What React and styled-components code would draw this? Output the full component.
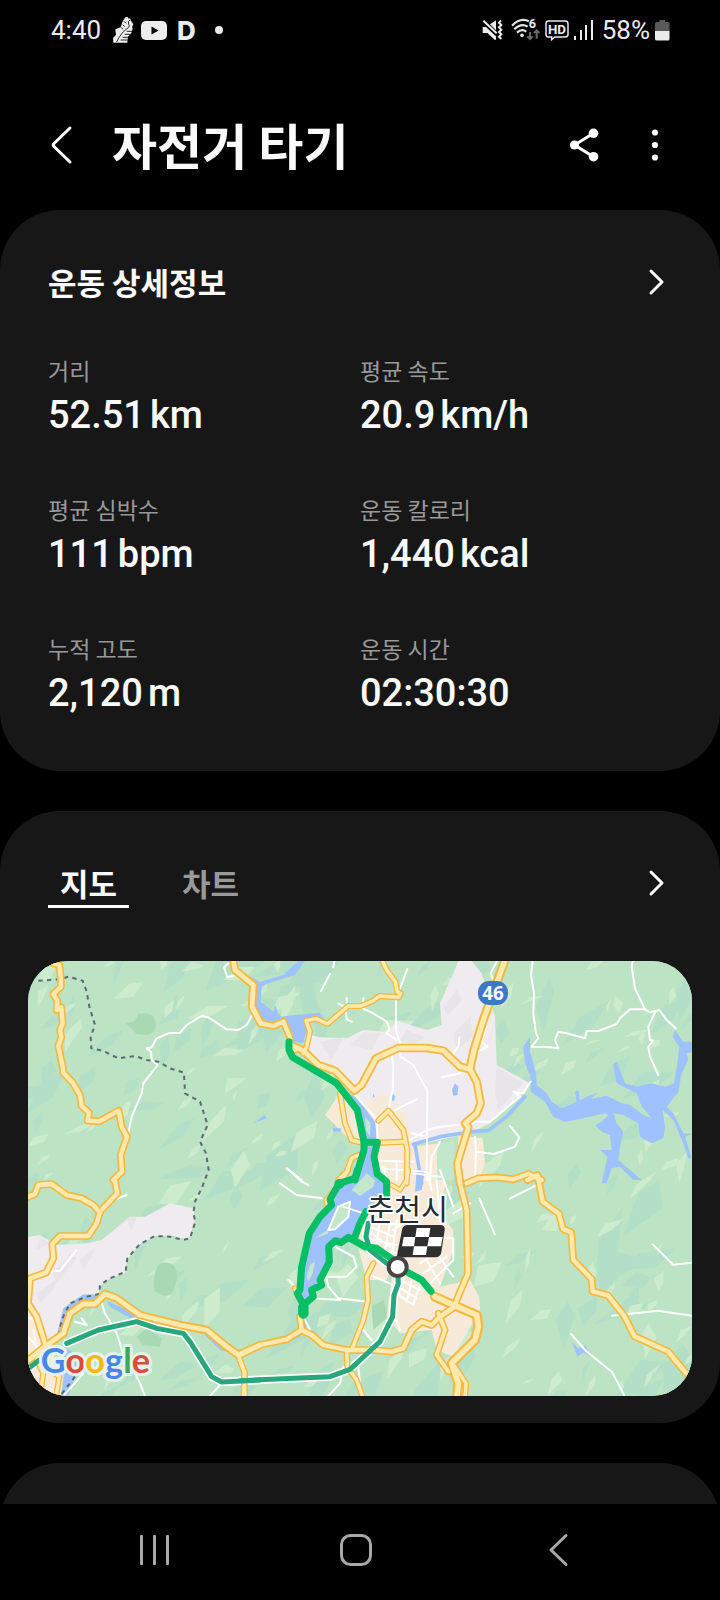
import React from 'react';
import styled, { createGlobalStyle } from 'styled-components';

const Global = createGlobalStyle`
  *, *::before, *::after { box-sizing: border-box; }
  html { background: #000; }
  body {
    margin: 0;
    background: #000;
    color: #fafafa;
    font-family: Roboto, 'Noto Sans CJK KR', sans-serif;
  }
`;

const Page = styled.div`
  display: flex;
  flex-direction: column;
  min-height: 100vh;
`;

const StatusBar = styled.div`
  display: flex;
  align-items: center;
  justify-content: space-between;
  height: 60px;
  padding: 0 50px 0 51px;
  color: #ececec;
  font-size: 26px;
  line-height: 32px;
`;

const StatusGroup = styled.div`
  display: flex;
  align-items: center;
  gap: ${(p) => p.$gap}px;
`;

const Glyph = styled.svg`
  display: block;
  flex: none;
`;

const IconButton = styled.button`
  display: flex;
  align-items: center;
  justify-content: center;
  flex: none;
  padding: 0;
  border: 0;
  background: none;
  color: ${(p) => p.$tone || '#fff'};
  cursor: pointer;
`;

const Header = styled.header`
  display: flex;
  align-items: center;
  gap: 39px;
  padding: 49px 53px 29px 49px;
`;

const Title = styled.h1`
  flex: 1;
  margin: 0;
  padding-bottom: 2px;
  font-family: 'Noto Sans CJK KR', sans-serif;
  font-size: 49px;
  font-weight: 700;
  line-height: 70px;
`;

const Actions = styled.div`
  display: flex;
  align-items: center;
  gap: 43px;
`;

const Cards = styled.main`
  display: flex;
  flex: 1;
  flex-direction: column;
  gap: 40px;
`;

const Card = styled.section`
  padding: 47px 0 ${(p) => p.$bottom}px;
  border-radius: 60px;
  background: #171717;
`;

const CardHead = styled.div`
  display: flex;
  align-items: center;
  justify-content: space-between;
  height: 50px;
  padding: 0 48px;
`;

const CardTitle = styled.h2`
  margin: 0;
  font-family: 'Noto Sans CJK KR', sans-serif;
  font-size: 31px;
  font-weight: 700;
  line-height: 44px;
`;

const Stats = styled.dl`
  display: grid;
  grid-template-columns: 1fr 1fr;
  row-gap: 55px;
  margin: 0;
  padding: 47px 48px 0;
`;

const Stat = styled.div`
  display: flex;
  flex-direction: column;
  gap: 6px;
`;

const StatLabel = styled.dt`
  color: #999;
  font-family: 'Noto Sans CJK KR', sans-serif;
  font-size: 23px;
  line-height: 32px;
`;

const StatValue = styled.dd`
  display: flex;
  gap: 5px;
  margin: 0;
  font-size: 38px;
  font-weight: 500;
  line-height: 46px;
`;

const Tabs = styled.div`
  display: flex;
  gap: 41px;
`;

const Tab = styled.button`
  padding: 3px 12px 0;
  border: 0;
  border-bottom: 3px solid ${(p) => (p.$active ? '#fff' : 'transparent')};
  background: none;
  color: ${(p) => (p.$active ? '#fafafa' : '#999')};
  font-family: 'Noto Sans CJK KR', sans-serif;
  font-size: 31px;
  font-weight: 700;
  line-height: 44px;
  cursor: pointer;
`;

const MapFrame = styled.div`
  margin: 53px 28px 0;
  overflow: hidden;
  border-radius: 40px;
  background: #bbe3c4;
`;

const MapSvg = styled.svg`
  display: block;
  width: 100%;
  height: auto;
`;

const Peek = styled.div`
  flex: 1 0 0;
  min-height: 41px;
  overflow: hidden;
`;

const PeekCard = styled.div`
  height: 100%;
  min-height: 120px;
  border-radius: 60px 60px 0 0;
  background: #171717;
`;

const NavBar = styled.nav`
  display: grid;
  grid-template-columns: repeat(3, 1fr);
  justify-items: center;
  align-items: center;
  height: 96px;
  padding: 0 61px 4px 54px;
`;

/* ---- icons ---- */

const Chevron = ({ label }) => (
  <IconButton aria-label={label}>
    <Glyph width="24" height="32" viewBox="0 0 24 32" fill="none" stroke="currentColor" strokeWidth="3" strokeLinecap="round" strokeLinejoin="round">
      <path d="M3 5L14 16L3 27" />
    </Glyph>
  </IconButton>
);

const Shoe = () => (
  <Glyph width="22" height="28" viewBox="0 0 66 84" fill="#ececec">
    <path d="M40 4L46 2L50 8L54 7L57 14L64 25L60 34L62 38L58 52L48 62L46 80H4L3 66L12 56L10 40L26 34L32 16Z" />
    <path d="M54 12Q46 16 50 24Q54 28 50 34Q40 40 30 52T14 78M36 16L42 22M32 26L38 32M28 34L33 40M44 46L62 46M38 55L60 55M32 64L50 64M26 72L48 72" fill="none" stroke="#000" strokeWidth="2.500" />
  </Glyph>
);

const Play = () => (
  <Glyph width="26" height="20" viewBox="0 0 26 20">
    <rect width="26" height="19" y="1" rx="5" fill="#ececec" />
    <path d="M10.500 6.500L17.500 10.500L10.500 14.500Z" fill="#000" />
  </Glyph>
);

const DLogo = () => (
  <Glyph width="20" height="36" viewBox="0 0 20 36">
    <text x="0" y="28" fill="#ececec" fontFamily="Inter, sans-serif" fontSize="26" fontWeight="800">D</text>
  </Glyph>
);

const Mute = () => (
  <Glyph width="21" height="22" viewBox="0 0 63 66" fill="#ececec">
    <path d="M2 24H12L42 52V62H38L16 42H2ZM24 16L42 4V34Z" />
    <path d="M4 5L44 43" stroke="#ececec" strokeWidth="6" />
    <path d="M57 4L51 11L58 18L51 25L58 32L51 39L58 46L51 53L58 60" fill="none" stroke="#ececec" strokeWidth="6" />
  </Glyph>
);

const Wifi = () => (
  <Glyph width="29" height="30" viewBox="0 -9 87 90">
    <g fill="none" stroke="#e4e4e4" strokeWidth="6.500">
      <path d="M3 23Q28 -3 54 10" />
      <path d="M10 34Q30 14 50 26" />
      <path d="M18 44Q32 31 46 41" />
    </g>
    <circle cx="33" cy="52" r="5.500" fill="#e4e4e4" />
    <text x="53" y="31" fill="#ececec" fontFamily="Roboto, sans-serif" fontSize="38" fontWeight="700">6</text>
    <path d="M57 42V62M49 55L57 63L65 55M77 62V38M69 45L77 37L85 45" fill="none" stroke="#686868" strokeWidth="6" />
  </Glyph>
);

const Hd = () => (
  <Glyph width="24" height="22" viewBox="0 0 72 66">
    <path d="M10 6H60Q69 6 69 14V46Q69 54 60 54H30L20 62V54H10Q3 54 3 46V14Q3 6 10 6Z" fill="none" stroke="#ececec" strokeWidth="4.500" />
    <text x="36" y="44" textAnchor="middle" fill="#ececec" fontFamily="Roboto, sans-serif" fontSize="40" fontWeight="700">HD</text>
  </Glyph>
);

const Signal = () => (
  <Glyph width="20" height="20" viewBox="0 0 20 20" fill="#ececec">
    <rect x="0" y="16" width="2" height="4" />
    <rect x="6" y="10" width="2" height="10" />
    <rect x="11" y="5" width="2" height="15" />
    <rect x="17" y="0" width="2" height="20" />
  </Glyph>
);

const Battery = () => (
  <Glyph width="15" height="22" viewBox="0 0 15 22">
    <path d="M4.500 1H10V3H13Q14.500 3 14.500 4.500V12H0V4.500Q0 3 2 3H4.500Z" fill="#5a5a5a" />
    <path d="M0 12H14.500V20Q14.500 21.500 13 21.500H2Q0 21.500 0 20Z" fill="#ececec" />
  </Glyph>
);

/* ---- map ---- */

/* The map is charted in sheets; each sheet has its own origin and scale. */
const SHEETS = {
  nw: [-24, -33, 1],
  n: [636, -33, 1],
  ne: [1326, -33, 1],
  sw: [-24, 627, 1],
  s: [636, 627, 1],
  se: [-84, -2883, 3.06],
};

const Lines = ({ data, color, width, dash }) =>
  data.map(([sheet, d, w = 1], i) => {
    const [x, y, s] = SHEETS[sheet];
    return (
      <path
        key={i}
        d={d}
        transform={`translate(${x} ${y}) scale(${s})`}
        fill="none"
        stroke={color}
        strokeWidth={(width * w) / s}
        strokeDasharray={dash}
        strokeLinecap={dash ? 'butt' : 'round'}
        strokeLinejoin="round"
      />
    );
  });

const Areas = ({ data, color }) =>
  data.map(([sheet, d], i) => {
    const [x, y, s] = SHEETS[sheet];
    return <path key={i} d={d} fill={color} transform={`translate(${x} ${y}) scale(${s})`} />;
  });

/* Scattered facets for the hill shading, from a fixed seed. */
const facets = (() => {
  let seed = 977;
  const rnd = () => {
    seed = (seed * 16807) % 2147483647;
    return seed / 2147483647;
  };
  return Array.from({ length: 320 }, (_, i) => {
    const light = i >= 160;
    const x = rnd() * 1992;
    const y = rnd() * 1305;
    const r = (light ? 20 : 32) + rnd() * rnd() * (light ? 66 : 100);
    const a = -1.4 + rnd() * 1.3;
    const c = Math.cos(a);
    const s = Math.sin(a);
    const pt = (u, v) => `${Math.round(x + (u * c - v * s) * r)} ${Math.round(y + (u * s + v * c) * r)}`;
    const w = 0.25 + rnd() * 0.45;
    return {
      d: `M${pt(-1, rnd() * 0.3)}L${pt(rnd() * 0.6 - 0.3, -w)}L${pt(1, -w * rnd())}L${pt(rnd() * 0.8 - 0.2, w * rnd())}Z`,
      light,
    };
  });
})();

const urban = [
  ['n', 'M215 255L240 262L320 265L370 240L440 245L470 212L560 240L605 225L600 160L640 70L655 33L695 33L725 70L765 200L770 345L870 400L840 440L750 520L690 550L530 585L420 560L405 515L350 440L343 425L285 362L235 345L190 305Z'],
  ['sw', 'M24 200L60 195L110 225L200 220L245 210L330 140L375 140L450 100L520 115L525 150L505 210L460 198L405 198L360 222L320 270L315 310L270 325L240 350L235 370L190 378L140 410L115 480L100 520L24 600Z'],
  ['sw', 'M24 590L130 600L125 680L24 680Z'],
];

const urbanShade = [
  ['n', 'M240 275L310 262L275 330ZM330 285L375 245L420 250L395 300ZM500 240L555 262L520 285L480 270ZM610 170L650 120L665 150L625 195ZM640 250L690 200L700 260L650 300ZM770 350L850 400L775 480L765 430Z'],
  ['sw', 'M100 310L150 250L170 265L110 340ZM180 270L225 232L215 260L190 300ZM50 370L110 330L100 360L60 400ZM320 145L350 140L335 185ZM60 205L90 220L50 240Z'],
];

const town = [
  ['n', 'M300 430L255 495L335 575L370 575L352 480Z'],
  ['n', 'M375 455L430 430L490 480L520 590L600 580L595 690L420 690L405 640L412 570L405 520Z'],
  ['n', 'M655 555L728 565L735 640L715 700L650 700Z'],
  ['s', 'M440 0L600 0L615 50L600 130L640 180L640 240L600 350L500 370L455 300L375 215L350 200L380 120L440 80Z'],
  ['s', 'M460 290L600 350L690 330L718 380L720 420L640 560L590 540L575 480L480 490L440 440Z'],
  ['s', 'M355 235L455 290L440 330L380 330Z'],
  ['sw', 'M24 440L60 480L100 530L110 678H60L24 620Z'],
];

const water = [
  ['ne', 'M180 260L160 290L165 340L180 375L182 425L225 455L250 500L285 516L340 505L405 490L415 495L395 515L375 525L395 545L420 555L425 600L390 600L412 620L405 655L395 700L410 700L425 655L450 650L490 690L515 690L445 630L450 590L460 545L440 520L430 490L460 495L505 520L510 560L545 580L580 565L585 530L578 480L610 510L640 580L655 625L665 625L645 560L665 552L640 550L610 490L590 470L625 425L635 370L655 330L650 310L666 305L666 275L640 275L615 240L608 260L628 290L622 340L612 400L585 410L545 400L500 410L465 400L440 335L430 345L440 400L500 430L515 470L545 505L520 495L480 465L455 460L410 437L360 447L385 428L350 440L330 452L325 420L315 425L320 455L275 475L245 455L230 430L200 405L198 370L180 305Z'],
  ['n', 'M20 75L60 95L130 75L175 33L195 33L165 75L85 100L65 110L62 155L100 185L105 165L120 200L165 195L240 188L250 205L215 205L195 215L200 240L190 280L160 275L150 240L135 220L105 230L60 215L38 170L45 105Z'],
  ['n', 'M310 425L350 445L405 515L410 570L400 640L410 695L340 695L380 590L375 560L350 480Z'],
  ['s', 'M355 0L410 0L420 25L440 45L440 80L400 90L380 120L350 190L300 210L262 225L262 280L235 330L240 345L195 405L175 360L185 290L210 200L275 105L300 50L345 30Z'],
  ['sw', 'M112 490L130 415L190 373L240 375L235 392L190 395L150 420L128 490Z'],
  ['sw', 'M130 530L165 550L170 600L145 678H122L135 600Z'],
  ['sw', 'M260 392L360 438L330 444L270 410Z'],
  ['sw', 'M545 485L645 550L600 540Z'],
  ['n', 'M645 400L655 410L652 435L640 437L636 420ZM458 430L466 440L460 455L450 445ZM400 430L405 440L398 445ZM40 520L75 495L80 505ZM278 535L305 535L300 545L280 545Z'],
  ['s', 'M530 0H555L545 60L525 65ZM190 440L200 470L140 520L180 500Z'],
  ['se', 'M561 1316L567 1322L574 1319L579 1330L572 1326L566 1330Z'],
];

const islands = [
  ['s', 'M335 60L380 10L405 30L400 50L360 78ZM225 205L270 175L262 192ZM200 320L210 285L225 275L218 310L205 335ZM265 180L295 110L330 95L325 140L285 178Z'],
  ['n', 'M375 500L392 520L390 560L378 540Z'],
  ['n', 'M590 580L640 572L650 640L640 690H592Z'],
];

const parks = [
  ['nw', 'M318 220L345 212L355 192Q375 185 400 198L408 222Q405 252 380 254L350 252Z'],
  ['sw', 'M405 310Q410 278 435 277Q465 280 470 305Q472 345 455 372Q432 384 405 362Q398 335 405 310ZM350 500L380 475L425 505L420 530L370 525Z'],
  ['s', 'M395 410L430 390L445 440L400 480Z'],
];

const streams = [
  ['n', 'M520 583L600 560L690 546'],
  ['ne', 'M0 545L55 542L110 500L165 440'],
  ['n', 'M525 585L545 700'],
];

const minor = [
  ['nw', 'M326 545L335 500L365 430L370 400L413 345L395 330L393 305L380 295L395 292L410 265L445 250L480 248L500 225L545 198L565 202L620 238L655 240L680 225L697 195M625 40L612 52L622 82L640 78'],
  ['n', 'M283 33L280 52M270 72L243 123M502 57L482 110L468 150L468 240L480 280L482 320L520 345L555 410L562 420L560 690M455 310L460 350L458 420L445 480M295 160L320 175L320 145M318 185L320 208L335 215M370 145L368 175L400 190L440 215L448 235L440 250L470 270M658 262L655 290L640 310L645 345M605 382L660 370M465 480L530 448M345 435L412 510L412 580M412 632L520 635M412 655L560 665M470 632V690M430 650L440 690M510 570L560 540L600 530L700 520M515 550L560 560M570 690L575 620L600 575M140 655L185 690'],
  ['ne', 'M188 33L183 75L192 130L190 190L198 250L205 265L185 290L240 292L265 295L255 270L265 245L290 250L345 265L350 243L385 243L440 222L450 205L480 178L525 178L495 115L485 50L488 33M525 178L540 187L568 180L590 210L617 235M555 187L535 230L540 270L550 272L535 290L540 320L565 375M80 35L62 70L68 85M50 230L35 275L52 290L25 305M0 515L60 515L150 440L130 425L160 430L182 395M120 528L148 562L135 590L72 612L18 605L15 560M18 605L15 690'],
  ['s', 'M140 -5L185 35L205 45M120 40L170 75L245 85M255 310L265 350L295 385L380 395M240 345L215 385L300 390M145 330L180 365M275 225L340 260L350 290L320 320L260 320M265 180L295 110L330 95L325 140L285 178ZM310 110L370 130M460 430L480 480M370 480L395 510M265 678L300 640L310 590M355 590L360 640M190 440L215 490M640 130L690 100'],
  ['s', 'M390 170L460 200M395 190L450 230M420 150L410 220M450 160L435 240M540 280L600 240M550 310L620 260M570 340L640 270M560 270L600 340M590 250L640 320M480 330L540 360M475 350L530 385M470 370L520 405M490 320L475 375M515 335L500 395M540 345L520 400M380 310L470 350M460 180L490 160M600 200L640 205L640 270M600 0L640 110M520 10L600 20M560 0L575 60M590 30L600 150M385 155L480 165M380 205L470 225M470 150L455 260M400 240L470 250'],
  ['sw', 'M245 400L255 430L290 490L300 520L310 560L345 610L360 640L375 678M170 240L120 302L80 305M165 455L200 465L185 445M24 440L60 460L70 520M280 90L320 75M570 678L600 645M24 500L60 540M40 480L50 540M130 678L190 610'],
  ['se', 'M470 1175L485 1210M560 1308L575 1325L600 1345L612 1368M640 1220L660 1240L678 1238M500 1175L530 1160M600 1290L645 1285L678 1290'],
];

const roads = [
  ['nw', 'M95 38L118 45L122 80L123 110L100 132L112 152L110 180L124 172L128 220L120 240L124 262L115 288L128 350L130 368L158 398L180 435L185 468L207 488L203 512L238 514L296 482L305 530L321 560L302 615L306 665L280 690'],
  ['sw', 'M284 30L292 70L240 125L230 160L205 198L120 198L97 222L100 265L78 308L30 325L24 400L50 440L75 520'],
  ['sw', 'M20 82L45 72L55 45L95 42L140 75L185 85L220 105L240 128'],
  ['nw', 'M640 30L645 60L700 105L696 170L722 220', 1.1],
  ['n', 'M38 175L62 220L100 228L130 215L150 262L152 290L165 300'],
  ['n', 'M428 33L440 60L466 95L472 125L482 130L476 142L418 138L400 152L362 168L325 168L262 222L228 206L198 212L210 245L200 290L190 310', 0.8],
  ['n', 'M152 285L190 302L235 345L285 362L343 422L365 405L408 325L475 294L560 294L610 302L660 350L690 358L710 395L722 460L710 490L675 520L685 532L652 640L660 700', 1.1],
  ['ne', 'M104 33L40 210L12 300L0 355', 1.2],
  ['s', 'M655 0L660 40L680 120L684 310L650 390L645 410L600 440', 1],
  ['s', 'M680 40L715 25L770 22L820 28L865 12L905 30'],
  ['se', 'M517 1157L527 1152L532 1178L548 1190L552 1205L560 1208L562 1235L580 1254L581 1266L596 1270L612 1290L622 1310L655 1325L680 1355'],
  ['n', 'M300 430L315 520L335 570L370 580L495 575', 0.8],
  ['n', 'M415 512L445 482L490 540L502 600L500 700', 0.8],
  ['n', 'M355 615L335 625L320 665L295 690', 0.8],
  ['s', 'M325 0L300 40L258 90L262 108', 0.7],
  ['s', 'M505 0L500 30L480 60L455 45', 0.7],
  ['s', 'M180 440L185 480L140 508L60 525L0 555'],
  ['s', 'M185 480L215 495L250 525L320 540L400 540L455 545L490 535L515 480L545 455L575 465L600 440L645 410'],
  ['s', 'M400 280L380 320L384 390L370 450L335 540', 0.8],
  ['s', 'M320 540L322 590L350 630L368 680', 0.8],
  ['s', 'M0 570L15 610L10 680', 0.8],
  ['s', 'M165 355L172 375', 0.8],
  ['s', 'M585 380L640 405L710 435L715 470L705 510L635 580L655 640L650 690', 1.3],
  ['s', 'M595 430L615 480L590 555L625 605', 0.9],
  ['s', 'M645 590L678 640L675 690', 0.8],
  ['sw', 'M24 572L75 530L130 490L150 430L190 402L225 402L255 372L290 385L360 435L480 465L560 480L620 530L655 555L720 525', 1.1],
  ['sw', 'M655 555L672 605L675 680', 0.8],
  ['sw', 'M75 530L50 570L70 610L65 645M90 600L118 620L110 670', 0.8],
];

const rail = [
  ['sw', 'M20 600L55 572M140 520L235 480L350 455L410 475L490 490L510 515L575 620L605 636L720 630'],
  ['s', 'M0 632L180 624L270 620L330 598L420 515L458 440L462 375L475 340L472 290L440 280L390 240L378 200L385 160'],
];

const border = [
  ['nw', 'M55 92L120 88L145 80L188 92L200 125L208 170L225 225L212 260L214 295L250 303L295 325L345 318L380 330L415 335L450 355L492 368L495 430L540 455L563 525L540 575L558 610L566 660L545 715L525 755L520 790L526 815L510 865L490 870L450 860L405 858L360 882L322 925L317 965L270 985L240 1005L238 1032L200 1040L150 1060L125 1110L115 1160'],
  ['sw', 'M165 620L120 678'],
];

const route = [
  ['n', 'M147 275L147 300L158 322L290 400L352 480L372 575L372 600L345 690'],
  ['n', 'M372 577L412 577L402 620L412 672L440 695L440 735'],
  ['s', 'M352 0L345 25L298 40L270 88L275 105L240 140L208 190L185 290L180 360L172 370L190 405L190 435L190 405L220 380L215 360L245 345L240 330L268 275L266 230L285 212L303 218L325 202L375 230L410 235L475 280L490 300L545 330L573 364'],
  ['s', 'M345 200L360 160L378 125'],
  ['s', 'M190 412V430', 1.5],
];

const RideMap = () => (
  <MapSvg viewBox="0 0 1992 1305" role="img" aria-label="춘천시 주행 경로 지도">
    <rect width="1992" height="1305" fill="#bbe3c4" />
    {facets.map((f, i) => (
      <path key={i} d={f.d} fill={f.light ? '#cdebcd' : '#b2dfc6'} />
    ))}
    <Areas data={parks} color="#a9d9b3" />
    <Areas data={urban} color="#efebef" />
    <Areas data={urbanShade} color="#e7e5e8" />
    <Areas data={town} color="#f8ead9" />
    <Areas data={water} color="#9dc2ff" />
    <Areas data={islands} color="#c3e7cc" />
    <Lines data={streams} color="#9dc2ff" width={11} />
    <Lines data={minor} color="#fff" width={6} />
    <Lines data={rail} color="#fff" width={25} />
    <Lines data={border} color="#5b6b75" width={6} dash="13 13" />
    <Lines data={roads} color="#f5b942" width={23} />
    <Lines data={roads} color="#ffe9ac" width={13} />
    <Lines data={rail} color="#27a77b" width={15} />
    <Lines data={route} color="#05bf66" width={21} />
    <g transform="translate(1326 -33)">
      <rect x="24" y="93" width="90" height="72" rx="34" fill="#3d78c6" />
      <text x="69" y="149" textAnchor="middle" fill="#fff" fontFamily="'Noto Sans', sans-serif" fontSize="56" fontWeight="700">46</text>
    </g>
    <g transform="translate(636 627)">
      <circle cx="298" cy="42" r="15" fill="#05bf66" />
      <path d="M504 165H600Q616 165 614 180L604 246Q602 262 586 262H470L486 180Q488 165 504 165Z" fill="#2f2f2f" />
      <path d="M530 174H571L567 201H608L603 229H562L558 255H518L522 229H486L491 201H526ZM526 201L522 229H562L567 201Z" fill="#fff" fillRule="evenodd" />
      <circle cx="473" cy="291" r="27" fill="#fff" stroke="#464646" strokeWidth="12" />
      <text x="381" y="150" fill="#242a30" stroke="#fff" strokeWidth="10" strokeLinejoin="round" paintOrder="stroke" fontFamily="'Noto Sans CJK KR', sans-serif" fontSize="88">춘천시</text>
    </g>
    <text x="38" y="1236" fontFamily="Lato, sans-serif" fontSize="103" fontWeight="700" stroke="#e3f3ea" strokeWidth="18" strokeLinejoin="round" paintOrder="stroke">
      <tspan fill="#4886ef">G</tspan>
      <tspan fill="#dc4a3d">o</tspan>
      <tspan fill="#f3b912">o</tspan>
      <tspan fill="#4886ef">g</tspan>
      <tspan fill="#43a45d">l</tspan>
      <tspan fill="#dc4a3d">e</tspan>
    </text>
  </MapSvg>
);

const stats = [
  ['거리', '52.51', 'km'],
  ['평균 속도', '20.9', 'km/h'],
  ['평균 심박수', '111', 'bpm'],
  ['운동 칼로리', '1,440', 'kcal'],
  ['누적 고도', '2,120', 'm'],
  ['운동 시간', '02:30:30', ''],
];

export default function App() {
  return (
    <Page>
      <Global />
      <StatusBar>
        <StatusGroup $gap={7}>
          <StatusGroup $gap={11}>
            <span>4:40</span>
            <Shoe />
          </StatusGroup>
          <StatusGroup $gap={10}>
            <Play />
            <DLogo />
          </StatusGroup>
          <Glyph width="28" height="8" viewBox="0 0 28 8">
            <circle cx="15" cy="4" r="4" fill="#ececec" />
          </Glyph>
        </StatusGroup>
        <StatusGroup $gap={5}>
          <StatusGroup $gap={8}>
            <Mute />
            <StatusGroup $gap={5}>
              <Wifi />
              <Hd />
              <Signal />
            </StatusGroup>
            <span>58%</span>
          </StatusGroup>
          <Battery />
        </StatusGroup>
      </StatusBar>

      <Header>
        <IconButton aria-label="뒤로">
          <Glyph width="24" height="40" viewBox="0 0 24 40" fill="none" stroke="currentColor" strokeWidth="3" strokeLinecap="round" strokeLinejoin="round">
            <path d="M21 3L5 18.500Q3.500 20 5 21.500L21 37" />
          </Glyph>
        </IconButton>
        <Title>자전거 타기</Title>
        <Actions>
          <IconButton aria-label="공유">
            <Glyph width="32" height="36" viewBox="0 0 32 36" fill="currentColor">
              <path d="M25.500 6.300L6.500 18L25.500 29.700" fill="none" stroke="currentColor" strokeWidth="3" />
              <circle cx="6.500" cy="18" r="4.600" />
              <circle cx="25.500" cy="6.300" r="4.800" />
              <circle cx="25.500" cy="29.700" r="4.800" />
            </Glyph>
          </IconButton>
          <IconButton aria-label="더보기">
            <Glyph width="24" height="36" viewBox="0 0 24 36" fill="currentColor">
              <circle cx="12" cy="5.500" r="3.100" />
              <circle cx="12" cy="18" r="3.100" />
              <circle cx="12" cy="30.500" r="3.100" />
            </Glyph>
          </IconButton>
        </Actions>
      </Header>

      <Cards>
        <Card $bottom={55}>
          <CardHead>
            <CardTitle>운동 상세정보</CardTitle>
            <Chevron label="운동 상세정보 보기" />
          </CardHead>
          <Stats>
            {stats.map(([label, value, unit]) => (
              <Stat key={label}>
                <StatLabel>{label}</StatLabel>
                <StatValue>
                  <span>{value}</span>
                  {unit && <span>{unit}</span>}
                </StatValue>
              </Stat>
            ))}
          </Stats>
        </Card>

        <Card $bottom={27}>
          <CardHead>
            <Tabs role="tablist">
              <Tab role="tab" aria-selected="true" $active>지도</Tab>
              <Tab role="tab" aria-selected="false">차트</Tab>
            </Tabs>
            <Chevron label="지도 보기" />
          </CardHead>
          <MapFrame>
            <RideMap />
          </MapFrame>
        </Card>

        <Peek>
          <PeekCard />
        </Peek>
      </Cards>

      <NavBar>
        <IconButton aria-label="최근 앱" $tone="#a9a9a9">
          <Glyph width="32" height="32" viewBox="0 0 32 32" fill="currentColor">
            <rect x="1" y="1" width="3" height="30" rx="1" />
            <rect x="14" y="1" width="3" height="30" rx="1" />
            <rect x="27" y="1" width="3" height="30" rx="1" />
          </Glyph>
        </IconButton>
        <IconButton aria-label="홈" $tone="#a9a9a9">
          <Glyph width="34" height="34" viewBox="0 0 34 34" fill="none" stroke="currentColor" strokeWidth="3">
            <rect x="2.500" y="2.500" width="29" height="29" rx="9" />
          </Glyph>
        </IconButton>
        <IconButton aria-label="뒤로 가기" $tone="#a9a9a9">
          <Glyph width="24" height="34" viewBox="0 0 24 34" fill="none" stroke="currentColor" strokeWidth="3" strokeLinecap="round" strokeLinejoin="round">
            <path d="M20 2.500L5 17L20 31.500" />
          </Glyph>
        </IconButton>
      </NavBar>
    </Page>
  );
}
